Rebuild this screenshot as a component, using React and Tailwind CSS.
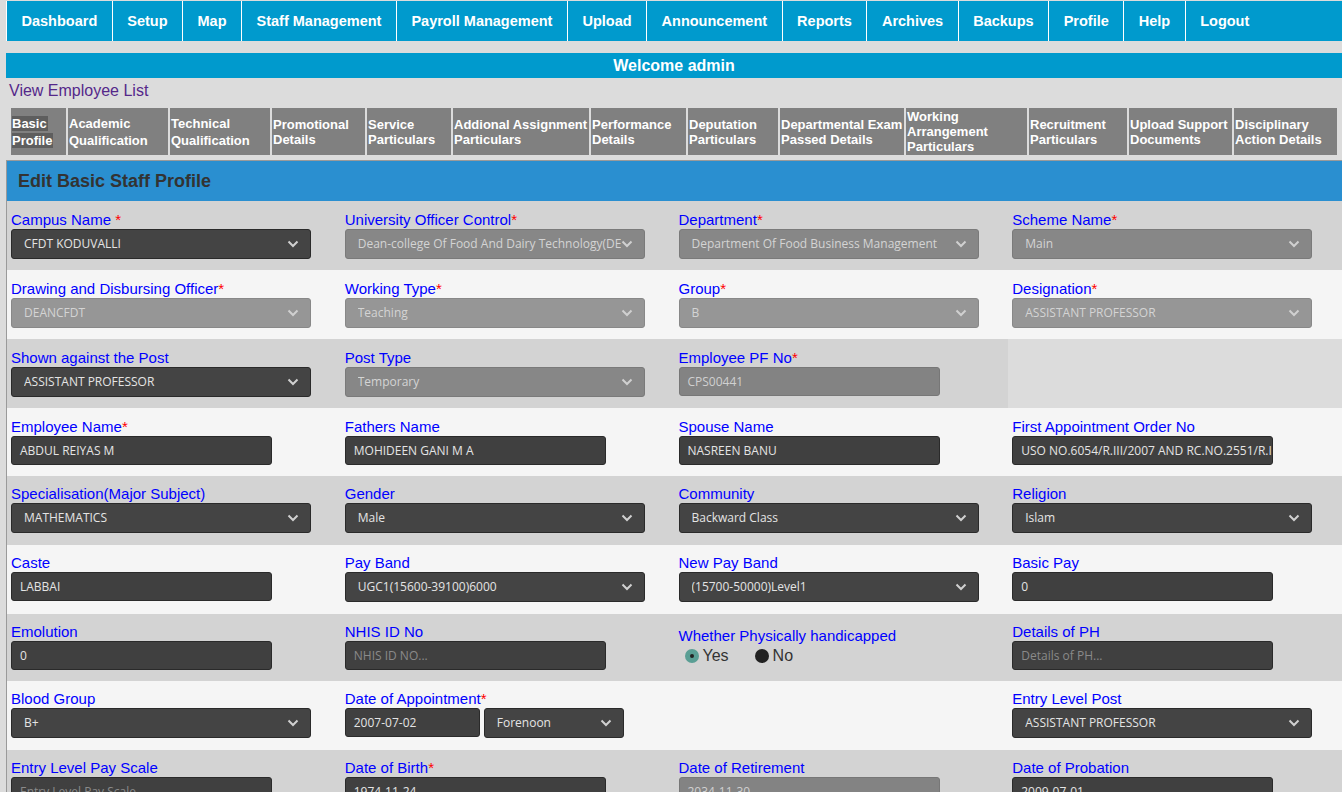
const navItems = [
  "Dashboard",
  "Setup",
  "Map",
  "Staff Management",
  "Payroll Management",
  "Upload",
  "Announcement",
  "Reports",
  "Archives",
  "Backups",
  "Profile",
  "Help",
  "Logout",
];

const tabs = [
  { label: ["Basic", "Profile"], w: "w-[55px]", active: true, tall: true },
  { label: ["Academic", "Qualification"], w: "w-[100px]", tall: true },
  { label: ["Technical", "Qualification"], w: "w-[100px]", tall: true },
  { label: ["Promotional", "Details"], w: "w-[93px]" },
  { label: ["Service", "Particulars"], w: "w-[84px]" },
  { label: ["Addional Assignment", "Particulars"], w: "w-[136px]" },
  { label: ["Performance", "Details"], w: "w-[95px]" },
  { label: ["Deputation", "Particulars"], w: "w-[90px]" },
  { label: ["Departmental Exam", "Passed Details"], w: "w-[124px]" },
  { label: ["Working", "Arrangement", "Particulars"], w: "w-[121px]" },
  { label: ["Recruitment", "Particulars"], w: "w-[98px]" },
  { label: ["Upload Support", "Documents"], w: "w-[103px]" },
  { label: ["Disciplinary", "Action Details"], w: "w-[103px]" },
];

const rows = [
  {
    h: "h-[69px]",
    pt: "pt-[10px]",
    cells: [
      { label: "Campus Name", req: " *", type: "select", value: "CFDT KODUVALLI" },
      { label: "University Officer Control", req: "*", type: "select", value: "Dean-college Of Food And Dairy Technology(DEANCFDT)", disabled: true },
      { label: "Department", req: "*", type: "select", value: "Department Of Food Business Management", disabled: true },
      { label: "Scheme Name", req: "*", type: "select", value: "Main", disabled: true },
    ],
  },
  {
    h: "h-[69px]",
    pt: "pt-[10px]",
    cells: [
      { label: "Drawing and Disbursing Officer", req: "*", type: "select", value: "DEANCFDT", disabled: true },
      { label: "Working Type", req: "*", type: "select", value: "Teaching", disabled: true },
      { label: "Group", req: "*", type: "select", value: "B", disabled: true },
      { label: "Designation", req: "*", type: "select", value: "ASSISTANT PROFESSOR", disabled: true },
    ],
  },
  {
    h: "h-[69px]",
    pt: "pt-[10px]",
    cells: [
      { label: "Shown against the Post", type: "select", value: "ASSISTANT PROFESSOR" },
      { label: "Post Type", type: "select", value: "Temporary", disabled: true },
      { label: "Employee PF No", req: "*", type: "input", value: "CPS00441", disabled: true },
      { type: "empty" },
    ],
  },
  {
    h: "h-[68px]",
    pt: "pt-[10px]",
    cells: [
      { label: "Employee Name", req: "*", type: "input", value: "ABDUL REIYAS M" },
      { label: "Fathers Name", type: "input", value: "MOHIDEEN GANI M A" },
      { label: "Spouse Name", type: "input", value: "NASREEN BANU" },
      { label: "First Appointment Order No", type: "input", value: "USO NO.6054/R.III/2007 AND RC.NO.2551/R.III/2007" },
    ],
  },
  {
    h: "h-[69px]",
    pt: "pt-[9px]",
    cells: [
      { label: "Specialisation(Major Subject)", type: "select", value: "MATHEMATICS" },
      { label: "Gender", type: "select", value: "Male" },
      { label: "Community", type: "select", value: "Backward Class" },
      { label: "Religion", type: "select", value: "Islam" },
    ],
  },
  {
    h: "h-[69px]",
    pt: "pt-[9px]",
    cells: [
      { label: "Caste", type: "input", value: "LABBAI" },
      { label: "Pay Band", type: "select", value: "UGC1(15600-39100)6000" },
      { label: "New Pay Band", type: "select", value: "(15700-50000)Level1" },
      { label: "Basic Pay", type: "input", value: "0" },
    ],
  },
  {
    h: "h-[67px]",
    pt: "pt-[9px]",
    cells: [
      { label: "Emolution", type: "input", value: "0" },
      { label: "NHIS ID No", type: "input", placeholder: "NHIS ID NO..." },
      { label: "Whether Physically handicapped", type: "radio" },
      { label: "Details of PH", type: "input", placeholder: "Details of PH..." },
    ],
  },
  {
    h: "h-[69px]",
    pt: "pt-[9px]",
    cells: [
      { label: "Blood Group", type: "select", value: "B+" },
      { label: "Date of Appointment", req: "*", type: "dual", value: "2007-07-02", option: "Forenoon" },
      { type: "blank" },
      { label: "Entry Level Post", type: "select", value: "ASSISTANT PROFESSOR" },
    ],
  },
  {
    h: "h-[69px]",
    pt: "pt-[9px]",
    cells: [
      { label: "Entry Level Pay Scale", type: "input", placeholder: "Entry Level Pay Scale" },
      { label: "Date of Birth", req: "*", type: "input", value: "1974-11-24" },
      { label: "Date of Retirement", type: "input", value: "2034-11-30", disabled: true },
      { label: "Date of Probation", type: "input", value: "2009-07-01" },
    ],
  },
];

function Chevron() {
  return (
    <svg width="12" height="8" viewBox="0 0 12 8" className="shrink-0">
      <polyline points="1.5,1.5 6,6 10.5,1.5" fill="none" stroke="#d0d0d0" strokeWidth="2" />
    </svg>
  );
}

function SelectBox({ value, disabled, shade, width = "w-[300px]" }) {
  const bg = disabled
    ? shade
      ? "bg-[#878787] border-[#7a7a7a]"
      : "bg-[#969696] border-[#888]"
    : "bg-[#444] border-[#2a2a2a]";
  return (
    <div className={`flex h-[30px] ${width} items-center justify-between rounded-[3px] border pl-[12px] pr-[11px] ${bg}`}>
      <span
        className={`overflow-hidden whitespace-nowrap pr-[6px] font-['Open_Sans',sans-serif] text-[12px] ${disabled ? "text-[#d4d4d4]" : "text-[#e4e4e4]"}`}
      >
        {value}
      </span>
      <Chevron />
    </div>
  );
}

function InputBox({ value, placeholder, disabled, width = "w-[261px]" }) {
  const bg = disabled ? "bg-[#838383] border-[#777]" : "bg-[#404040] border-[#2a2a2a]";
  return (
    <div className={`flex h-[29px] ${width} items-center overflow-hidden rounded-[3px] border pl-[8px] ${bg}`}>
      <span
        className={`whitespace-nowrap font-['Open_Sans',sans-serif] text-[12px] ${value ? (disabled ? "text-[#d0d0d0]" : "text-[#e4e4e4]") : "text-[#8a8a8a]"}`}
      >
        {value || placeholder}
      </span>
    </div>
  );
}

function Cell({ cell, shade, pt }) {
  if (cell.type === "empty") {
    return <div className="bg-[#dcdcdc]" />;
  }
  if (cell.type === "blank") {
    return <div />;
  }
  return (
    <div className={`px-1 ${cell.type === "radio" ? "pt-[13px]" : pt}`}>
      <div className="text-[15px] leading-[17px] text-[#0000ff]">
        {cell.label}
        {cell.req && <span className="text-[#ff0000]">{cell.req}</span>}
      </div>
      <div className="mt-[1px]">
        {cell.type === "select" && <SelectBox value={cell.value} disabled={cell.disabled} shade={shade} />}
        {cell.type === "input" && <InputBox value={cell.value} placeholder={cell.placeholder} disabled={cell.disabled} />}
        {cell.type === "dual" && (
          <div className="flex gap-[4px]">
            <InputBox value={cell.value} width="w-[135px]" />
            <SelectBox value={cell.option} width="w-[140px]" />
          </div>
        )}
        {cell.type === "radio" && (
          <div className="flex items-center pl-[6px] pt-[1px] text-[16px] leading-[20px] text-[#333]">
            <span className="flex h-[14px] w-[14px] items-center justify-center rounded-full bg-[#5a9e94]">
              <span className="h-[4px] w-[4px] rounded-full bg-[#222]" />
            </span>
            <span className="ml-[4px]">Yes</span>
            <span className="ml-[26px] h-[14px] w-[14px] rounded-full bg-[#222]" />
            <span className="ml-[4px]">No</span>
          </div>
        )}
      </div>
    </div>
  );
}

export default function App() {
  return (
    <div className="min-h-[792px] overflow-hidden bg-[#dcdcdc] font-['Liberation_Sans',Arial,sans-serif]">
      <div className="pl-[6px] pt-px">
        <nav className="flex h-[40px] border-l border-white bg-[#009acd]">
          {navItems.map((item, i) => (
            <div
              key={item}
              className={`flex items-center px-[14.5px] pt-[2px] text-[14.5px] font-bold text-white ${i < navItems.length - 1 ? "border-r border-white" : ""}`}
            >
              {item}
            </div>
          ))}
        </nav>
      </div>

      <div className="ml-[6px] mt-[12px] flex h-[25px] items-center justify-center bg-[#009acd] text-[16px] font-bold text-white">
        Welcome admin
      </div>

      <div className="ml-[9px] mt-[3px] text-[16px] leading-[20px] text-[#55288a]">View Employee List</div>

      <div className="ml-[11px] mt-[7px] flex h-[47px] gap-[2px]">
        {tabs.map((t, i) => (
          <div
            key={i}
            className={`flex ${t.w} shrink-0 flex-col justify-center bg-[#808080] pl-px text-[13px] font-bold text-white ${t.tall ? "leading-[17px]" : "leading-[15px]"}`}
          >
            {t.label.map((l) => (
              <div key={l} className="whitespace-nowrap">
                <span className={t.active ? "bg-[#5e5e5e] pr-px" : ""}>{l}</span>
              </div>
            ))}
          </div>
        ))}
      </div>

      <div className="ml-[6px] mt-[5px] border-l border-t border-[#9a9a9a]">
        <div className="flex h-[40px] items-center bg-[#2a8fd0] pl-[11px] text-[18px] font-bold text-[#333]">
          Edit Basic Staff Profile
        </div>
        <div>
          {rows.map((row, ri) => {
            const shade = ri % 2 === 0;
            return (
              <div key={ri} className={`grid ${row.h} grid-cols-4 ${shade ? "bg-[#d3d3d3]" : "bg-[#f5f5f5]"}`}>
                {row.cells.map((c, ci) => (
                  <Cell key={ci} cell={c} shade={shade} pt={row.pt} />
                ))}
              </div>
            );
          })}
        </div>
      </div>
    </div>
  );
}
